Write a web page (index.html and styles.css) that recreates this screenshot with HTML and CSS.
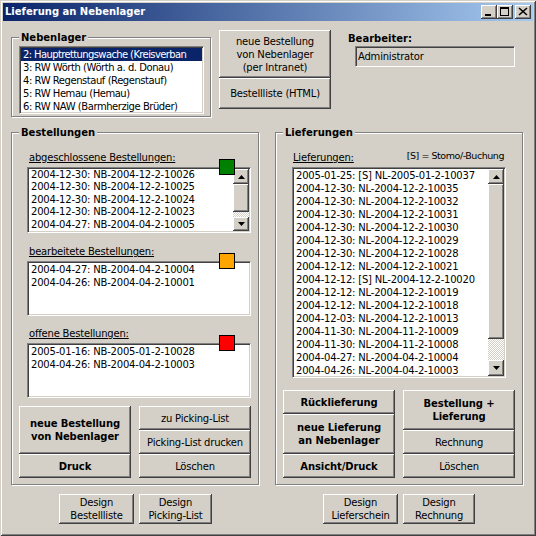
FILE: index.html
```html
<!DOCTYPE html>
<html lang="de">
<head>
<meta charset="utf-8">
<title>Lieferung an Nebenlager</title>
<link rel="stylesheet" href="styles.css">
</head>
<body>
<div class="window">
  <div class="titlebar">
    <span class="title">Lieferung an Nebenlager</span>
    <div class="caption-btns">
      <span class="raised cap-btn"><svg width="16" height="14" viewBox="0 0 16 14"><rect x="4" y="9" width="6" height="2" fill="#000"/></svg></span>
      <span class="raised cap-btn"><svg width="16" height="14" viewBox="0 0 16 14"><path d="M3 2h9v9H3z M4 4v6h7V4z" fill="#000" fill-rule="evenodd"/></svg></span>
      <span class="raised cap-btn cap-close"><svg width="16" height="14" viewBox="0 0 16 14"><path d="M4 3l8 7M12 3l-8 7" stroke="#000" stroke-width="1.6" fill="none"/></svg></span>
    </div>
  </div>

  <div class="client">
    <div class="top-row">
      <div class="group group-nl">
        <span class="legend">Nebenlager</span>
        <div class="sunken listbox lb-nl">
          <div class="rows">
            <div class="row sel">2: Hauptrettungswache (Kreisverban</div>
            <div class="row">3: RW Wörth (Wörth a. d. Donau)</div>
            <div class="row">4: RW Regenstauf (Regenstauf)</div>
            <div class="row">5: RW Hemau (Hemau)</div>
            <div class="row">6: RW NAW (Barmherzige Brüder)</div>
          </div>
        </div>
      </div>
      <div class="btn-col">
        <button class="raised btn h48">neue Bestellung<br>von Nebenlager<br>(per Intranet)</button>
        <button class="raised btn h31">Bestellliste (HTML)</button>
      </div>
      <div class="editor">
        <div class="editor-label">Bearbeiter:</div>
        <div class="sunken textbox">Administrator</div>
      </div>
    </div>

    <div class="mid-row">
      <div class="group group-big">
        <span class="legend">Bestellungen</span>

        <div class="field f1">
          <div class="field-label">abgeschlossene Bestellungen:</div>
          <div class="sunken listbox lb-done">
            <div class="rows">
              <div class="row">2004-12-30: NB-2004-12-2-10026</div>
              <div class="row">2004-12-30: NB-2004-12-2-10025</div>
              <div class="row">2004-12-30: NB-2004-12-2-10024</div>
              <div class="row">2004-12-30: NB-2004-12-2-10023</div>
              <div class="row">2004-04-27: NB-2004-04-2-10005</div>
            </div>
            <div class="scrollbar">
              <span class="raised sb-btn up15"><svg width="7" height="4" viewBox="0 0 7 4"><path d="M3.5 0L7 4H0z" fill="#000"/></svg></span>
              <span class="raised sb-thumb th28"></span>
              <span class="sb-track"></span>
              <span class="raised sb-btn dn14"><svg width="7" height="4" viewBox="0 0 7 4"><path d="M0 0h7L3.5 4z" fill="#000"/></svg></span>
            </div>
          </div>
          <span class="square green"></span>
        </div>

        <div class="field f2">
          <div class="field-label">bearbeitete Bestellungen:</div>
          <div class="sunken listbox lb-small">
            <div class="rows">
              <div class="row">2004-04-27: NB-2004-04-2-10004</div>
              <div class="row">2004-04-26: NB-2004-04-2-10001</div>
            </div>
          </div>
          <span class="square orange"></span>
        </div>

        <div class="field f3">
          <div class="field-label">offene Bestellungen:</div>
          <div class="sunken listbox lb-small">
            <div class="rows">
              <div class="row">2005-01-16: NB-2005-01-2-10028</div>
              <div class="row">2004-04-26: NB-2004-04-2-10003</div>
            </div>
          </div>
          <span class="square red"></span>
        </div>

        <div class="btn-grid bg-left">
          <div class="btn-stack">
            <button class="raised btn bold h48">neue Bestellung<br>von Nebenlager</button>
            <button class="raised btn bold h24">Druck</button>
          </div>
          <div class="btn-stack">
            <button class="raised btn h24">zu Picking-List</button>
            <button class="raised btn h24">Picking-List drucken</button>
            <button class="raised btn h24">Löschen</button>
          </div>
        </div>
      </div>

      <div class="group group-big group-right">
        <span class="legend">Lieferungen</span>
        <div class="head">
          <span class="field-label">Lieferungen:</span>
          <span class="hint">[S] = Stomo/-Buchung</span>
        </div>
        <div class="sunken listbox lb-lief">
          <div class="rows">
            <div class="row">2005-01-25: [S] NL-2005-01-2-10037</div>
            <div class="row">2004-12-30: NL-2004-12-2-10035</div>
            <div class="row">2004-12-30: NL-2004-12-2-10032</div>
            <div class="row">2004-12-30: NL-2004-12-2-10031</div>
            <div class="row">2004-12-30: NL-2004-12-2-10030</div>
            <div class="row">2004-12-30: NL-2004-12-2-10029</div>
            <div class="row">2004-12-30: NL-2004-12-2-10028</div>
            <div class="row">2004-12-12: NL-2004-12-2-10021</div>
            <div class="row">2004-12-12: [S] NL-2004-12-2-10020</div>
            <div class="row">2004-12-12: NL-2004-12-2-10019</div>
            <div class="row">2004-12-12: NL-2004-12-2-10018</div>
            <div class="row">2004-12-03: NL-2004-12-2-10013</div>
            <div class="row">2004-11-30: NL-2004-11-2-10009</div>
            <div class="row">2004-11-30: NL-2004-11-2-10008</div>
            <div class="row">2004-04-27: NL-2004-04-2-10004</div>
            <div class="row">2004-04-26: NL-2004-04-2-10003</div>
          </div>
          <div class="scrollbar">
            <span class="raised sb-btn up15"><svg width="7" height="4" viewBox="0 0 7 4"><path d="M3.5 0L7 4H0z" fill="#000"/></svg></span>
            <span class="raised sb-thumb th155"></span>
            <span class="sb-track"></span>
            <span class="raised sb-btn dn16"><svg width="7" height="4" viewBox="0 0 7 4"><path d="M0 0h7L3.5 4z" fill="#000"/></svg></span>
          </div>
        </div>

        <div class="btn-grid bg-right">
          <div class="btn-stack">
            <button class="raised btn bold h24">Rücklieferung</button>
            <button class="raised btn bold h40">neue Lieferung<br>an Nebenlager</button>
            <button class="raised btn bold h24">Ansicht/Druck</button>
          </div>
          <div class="btn-stack">
            <button class="raised btn bold h40">Bestellung +<br>Lieferung</button>
            <button class="raised btn h24">Rechnung</button>
            <button class="raised btn h24">Löschen</button>
          </div>
        </div>
      </div>
    </div>

    <div class="bottom-row">
      <button class="raised btn design d1">Design<br>Bestellliste</button>
      <button class="raised btn design d2">Design<br>Picking-List</button>
      <button class="raised btn design d3">Design<br>Lieferschein</button>
      <button class="raised btn design d4">Design<br>Rechnung</button>
    </div>
  </div>
</div>
</body>
</html>
```
FILE: styles.css
```css
* { box-sizing: border-box; }

body {
  margin: 0;
  background: #d4d0c8;
  font-family: "DejaVu Sans", "Verdana", sans-serif;
  font-size: 10px;
  letter-spacing: -0.2px;
  color: #000;
}

.window {
  width: 536px;
  height: 536px;
  padding: 3px;
  background: #d4d0c8;
  box-shadow: inset 1px 1px #d4d0c8, inset -1px -1px #404040,
              inset 2px 2px #ffffff, inset -2px -2px #808080;
}

/* title bar */
.titlebar {
  height: 18px;
  display: flex;
  align-items: center;
  padding: 0 2px;
  background: linear-gradient(to right, #0a246a, #a6caf0);
  color: #fff;
  font-weight: bold;
}
.title { flex: 1; line-height: 18px; letter-spacing: 0; }
.caption-btns { display: flex; }
.cap-btn { width: 16px; height: 14px; display: block; }
.cap-btn svg { display: block; }
.cap-close { margin-left: 2px; }

/* 3D styles */
.raised {
  background: #d4d0c8;
  border: none;
  box-shadow: inset -1px -1px #404040, inset 1px 1px #ffffff,
              inset -2px -2px #808080, inset 2px 2px #d4d0c8;
}
.sunken {
  border: 1px solid;
  border-color: #808080 #ffffff #ffffff #808080;
  box-shadow: inset 1px 1px #404040, inset -1px -1px #d4d0c8;
  padding: 1px;
}

/* group boxes */
.group {
  position: relative;
  border: 1px solid #808080;
  box-shadow: inset 1px 1px #ffffff, 1px 1px #ffffff;
}
.legend {
  position: absolute;
  top: -7px;
  left: 7px;
  padding: 0 2px;
  line-height: 13px;
  background: #d4d0c8;
  font-weight: bold;
  letter-spacing: 0;
}

/* client */
.top-row {
  display: flex;
  align-items: flex-start;
  margin-top: 9px;
  height: 87px;
}
.group-nl {
  margin-left: 8px;
  margin-top: 7px;
  width: 200px;
  height: 80px;
  padding: 8px 0 0 7px;
}
.lb-nl { width: 185px; height: 68px; }
.lb-nl .row { letter-spacing: -0.45px; }
.lb-nl .row.sel { letter-spacing: -0.62px; }

.listbox {
  background: #fff;
  display: flex;
  overflow: hidden;
}
.rows { flex: 1; min-width: 0; overflow: hidden; }
.row {
  line-height: 13px;
  height: 13px;
  padding-left: 2px;
  white-space: nowrap;
  overflow: hidden;
}
.row.sel { background: #0a246a; color: #fff; }

.btn-col {
  margin-left: 8px;
  width: 112px;
  display: flex;
  flex-direction: column;
}

.btn {
  font-family: inherit;
  font-size: 10px;
  letter-spacing: -0.2px;
  color: #000;
  line-height: 13px;
  padding: 0;
  margin: 0;
  display: flex;
  align-items: center;
  justify-content: center;
  text-align: center;
  width: 100%;
}
.btn.bold { font-weight: bold; letter-spacing: -0.1px; }
.h24 { height: 24px; }
.h31 { height: 31px; }
.h40 { height: 40px; }
.h48 { height: 48px; }

.editor { margin-left: 17px; }
.editor-label {
  margin-top: 2px;
  line-height: 13px;
  font-weight: bold;
  letter-spacing: 0;
}
.textbox {
  margin: 1px 0 0 7px;
  width: 160px;
  height: 21px;
  background: #d4d0c8;
  line-height: 17px;
  padding: 1px 2px;
}

.mid-row {
  display: flex;
  margin-top: 15px;
}
.group-big {
  width: 248px;
  height: 353px;
  margin-left: 8px;
}
.group-right { margin-left: 16px; }

.field {
  position: relative;
  width: 224px;
  margin-left: 15px;
}
.f1 { margin-top: 18px; }
.f2 { margin-top: 12px; }
.f3 { margin-top: 11px; }
.field-label {
  display: block;
  line-height: 13px;
  padding-left: 2px;
  text-decoration: underline;
}
.field .listbox { margin-top: 3px; }
.lb-done { height: 66px; }
.lb-done .row { height: 12.4px; line-height: 12.4px; }
.lb-small { height: 55px; }

.square {
  position: absolute;
  top: 8px;
  left: 192px;
  width: 16px;
  height: 16px;
  border: 1px solid #000;
}
.green { background: #008000; }
.orange { background: #ffa500; }
.red { background: #ff0000; }

.scrollbar {
  width: 16px;
  flex: none;
  display: flex;
  flex-direction: column;
}
.sb-btn {
  display: flex;
  align-items: center;
  justify-content: center;
}
.sb-btn svg { display: block; }
.up15 { height: 15px; }
.dn14 { height: 14px; }
.dn16 { height: 16px; }
.sb-thumb { display: block; }
.th28 { height: 28px; }
.th155 { height: 155px; }
.sb-track {
  flex: 1;
  background: repeating-conic-gradient(#ffffff 0 25%, #d4d0c8 0 50%) 0 0 / 2px 2px;
}

.btn-grid {
  display: flex;
  gap: 8px;
  margin-left: 7px;
}
.bg-left { margin-top: 8px; }
.bg-right { margin-top: 12px; }
.btn-stack {
  width: 112px;
  display: flex;
  flex-direction: column;
}

.head {
  display: flex;
  justify-content: space-between;
  align-items: flex-start;
  width: 214px;
  margin: 18px 0 0 16px;
}
.head .field-label { padding-left: 1px; }
.hint {
  line-height: 13px;
  margin-top: -2px;
  padding-right: 2px;
  font-size: 9.5px;
  letter-spacing: -0.45px;
}
.lb-lief {
  width: 214px;
  height: 211px;
  margin: 3px 0 0 16px;
}

.bottom-row {
  display: flex;
  margin-top: 9px;
}
.design { height: 30px; }
.d1 { width: 75px; margin-left: 56px; }
.d2 { width: 73px; margin-left: 5px; }
.d3 { width: 75px; margin-left: 111px; }
.d4 { width: 72px; margin-left: 5px; }
```
